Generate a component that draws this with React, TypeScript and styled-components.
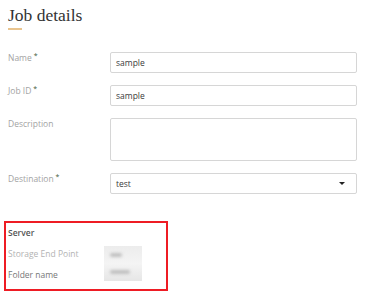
import React from "react";
import styled, { createGlobalStyle } from "styled-components";

const Global = createGlobalStyle`
  html, body { margin: 0; padding: 0; background: #fff; }
  body { font-family: "Open Sans", "Noto Sans", sans-serif; }
`;

const Page = styled.div`
  width: 367px;
  height: 300px;
  box-sizing: border-box;
  padding: 5px 10px 0 8px;
  overflow: hidden;
`;

const Title = styled.h1`
  margin: 0;
  font-family: "Liberation Serif", "DejaVu Serif", serif;
  font-weight: normal;
  font-size: 17.5px;
  line-height: 21px;
  color: #333;
`;

const Underline = styled.div`
  width: 14px;
  height: 2px;
  margin-top: 2px;
  background: #e9c48e;
`;

const Form = styled.div`
  display: flex;
  flex-direction: column;
  gap: 12px;
  margin-top: 22px;
`;

const Row = styled.div`
  display: flex;
  align-items: flex-start;
`;

const Label = styled.div`
  width: 102px;
  flex: none;
  font-size: 8.5px;
  line-height: 12px;
  color: #a3a3a3;
`;

const Star = styled.span`
  color: #3d5a3a;
  font-size: 7px;
  vertical-align: top;
  margin-left: 2px;
  position: relative;
  top: -2px;
`;

const Field = styled.div<{ $h?: number }>`
  width: 247px;
  height: ${(p) => p.$h ?? 21}px;
  box-sizing: border-box;
  border: 1px solid #d6d6d6;
  border-radius: 2px;
  display: flex;
  align-items: center;
  justify-content: space-between;
  padding: 0 11px 0 5px;
  font-size: 8.5px;
  color: #3a3a3a;
`;

const Caret = styled.span`
  width: 0;
  height: 0;
  border-left: 3px solid transparent;
  border-right: 3px solid transparent;
  border-top: 3px solid #222;
`;

const ServerBox = styled.div`
  margin: 27px 0 0 -4px;
  width: 164px;
  height: 70px;
  box-sizing: border-box;
  border: 2px solid #ee1c24;
  padding: 4px 0 0 2px;
  display: grid;
  grid-template-columns: 96px 38px;
  grid-template-rows: 16px 21px 21px;
`;

const ServerTitle = styled.div`
  grid-column: 1 / span 2;
  font-size: 8.5px;
  font-weight: 600;
  color: #555;
  line-height: 12px;
`;

const KeyLabel = styled.div<{ $dark?: boolean }>`
  font-size: 8.5px;
  line-height: 21px;
  color: ${(p) => (p.$dark ? "#777" : "#b3b3b3")};
`;

const Values = styled.div`
  grid-column: 2;
  grid-row: 2 / span 2;
  margin-top: 3px;
  height: 35px;
  background: linear-gradient(180deg, #ececec 0%, #f4f4f4 50%, #e6e6e6 100%);
  display: flex;
  flex-direction: column;
  justify-content: space-around;
  padding: 0 6px;
`;

const BlurText = styled.div<{ $w: number }>`
  width: ${(p) => p.$w}px;
  height: 4px;
  background: #c0c0c0;
  border-radius: 3px;
  filter: blur(1.5px);
`;

export default function App() {
  return (
    <>
      <Global />
      <Page>
        <Title>Job details</Title>
        <Underline />
        <Form>
          <Row>
            <Label>
              Name<Star>*</Star>
            </Label>
            <Field>sample</Field>
          </Row>
          <Row>
            <Label>
              Job ID<Star>*</Star>
            </Label>
            <Field>sample</Field>
          </Row>
          <Row>
            <Label>Description</Label>
            <Field $h={43} />
          </Row>
          <Row>
            <Label>
              Destination<Star>*</Star>
            </Label>
            <Field>
              test
              <Caret />
            </Field>
          </Row>
        </Form>
        <ServerBox>
          <ServerTitle>Server</ServerTitle>
          <KeyLabel>Storage End Point</KeyLabel>
          <Values>
            <BlurText $w={12} />
            <BlurText $w={20} />
          </Values>
          <KeyLabel $dark>Folder name</KeyLabel>
        </ServerBox>
      </Page>
    </>
  );
}
